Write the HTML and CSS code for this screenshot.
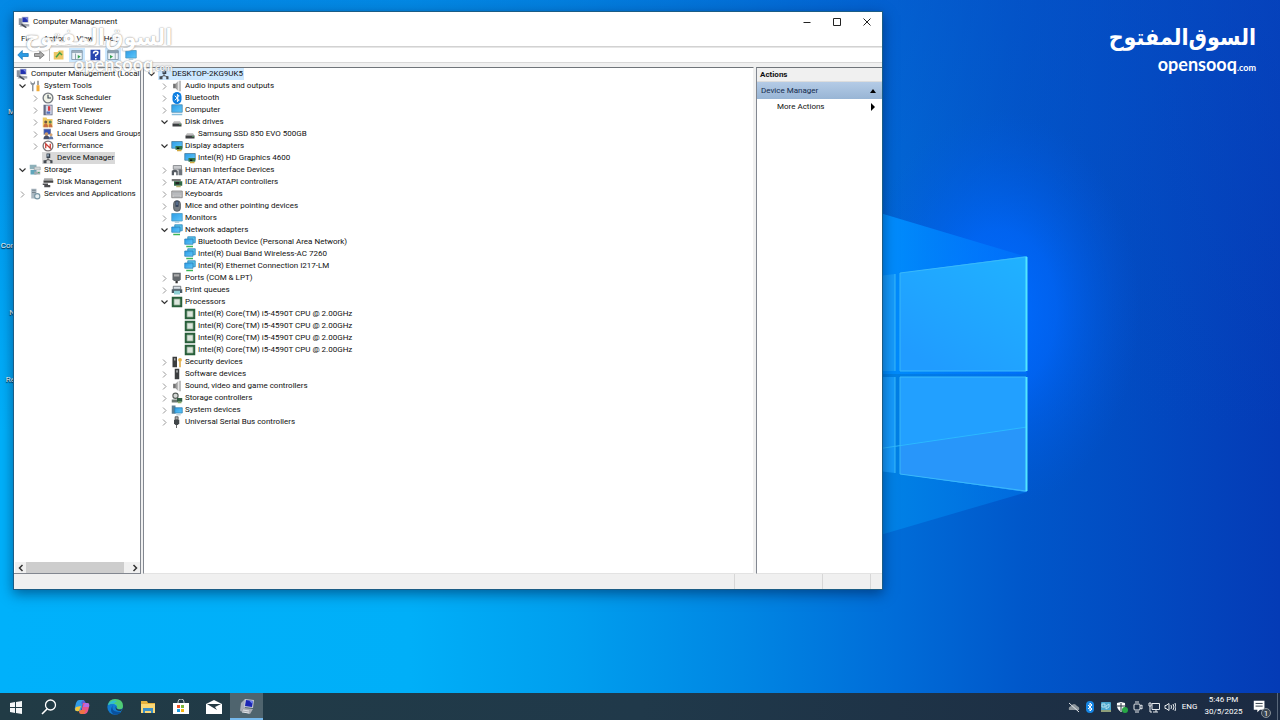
FILE: index.html
```html
<!DOCTYPE html>
<html lang="en">
<head>
<meta charset="utf-8">
<title>Computer Management</title>
<link rel="stylesheet" href="styles.css">
</head>
<body>
<svg class="sprite" aria-hidden="true">
  <defs>
    <linearGradient id="scr" x1="0" y1="0" x2="1" y2="1"><stop offset="0" stop-color="#2a9be6"/><stop offset="1" stop-color="#62c8fa"/></linearGradient>
    <linearGradient id="met" x1="0" y1="0" x2="1" y2="0"><stop offset="0" stop-color="#555"/><stop offset="1" stop-color="#ccc"/></linearGradient>
  </defs>
  <symbol id="open" viewBox="0 0 13 12"><path d="M3.500 4.500l3 3 3-3" fill="none" stroke="#333" stroke-width="1.200"/></symbol>
  <symbol id="closed" viewBox="0 0 13 12"><path d="M5 3.500l3 3-3 3" fill="none" stroke="#999" stroke-width="1"/></symbol>
  <symbol id="mgmt" viewBox="0 0 16 16"><path d="M1 3h5v9H1z" fill="#8c93a0"/><path d="M5 1h9v8H5z" fill="#b8bccb"/><path d="M6 2h7v6H6z" fill="#2433b0"/><path d="M9 2h4v4z" fill="#7786e6"/><path d="M2 14l3-4 10 1v3z" fill="#a4a8b2"/><path d="M5 10l7 5-2 1-6-4z" fill="#454b58"/></symbol>
  <symbol id="mgmtbig" viewBox="0 0 16 16"><path d="M2 5l4-4v9l-5 3z" fill="#aab0bb"/><path d="M6 1l9 1-1 8-9-1z" fill="#c4c8d6"/><path d="M7 2l7 1-1 6-7-1z" fill="#1a25b4"/><path d="M10 2.500l4 .5-.5 3z" fill="#6f82ee"/><path d="M1 13l4-3 9 1-3 5z" fill="#a9adb5"/><path d="M4 12l6 1M3 14l7 1" stroke="#dfe2e6"/></symbol>
  <symbol id="tools" viewBox="0 0 16 16"><path d="M2 1v4l2 2v8h2V7l2-2V1L6 4H4z" fill="#8d949b"/><path d="M11 1h2v6h-2z" fill="#888"/><path d="M10 7h4v8h-4z" fill="#f1aa35"/></symbol>
  <symbol id="clock" viewBox="0 0 16 16"><circle cx="8" cy="8" r="6.500" fill="#f1f3e8" stroke="#777b82" stroke-width="1.800"/><path d="M8 3.500V8h4" fill="none" stroke="#394553" stroke-width="1.500"/></symbol>
  <symbol id="event" viewBox="0 0 16 16"><path d="M2 1h12v14H2z" fill="#626b84"/><path d="M5 2h8v12H5z" fill="#d5d8e8"/><path d="M8 3h3v6H8z" fill="#d43e44"/><path d="M6 10h5v3H6z" fill="#5370bd"/></symbol>
  <symbol id="shared" viewBox="0 0 16 16"><path d="M1 2h5l1 2h7v11H1z" fill="#efcb64"/><circle cx="5" cy="8" r="2" fill="#6b5842"/><circle cx="11" cy="8" r="2" fill="#53855b"/><path d="M2 15q0-5 3-5t3 5zM9 15q0-5 2-5t3 5z" fill="#c86f45"/></symbol>
  <symbol id="users" viewBox="0 0 16 16"><path d="M2 1h10v8H2z" fill="#8993ac"/><path d="M3 2h8v6H3z" fill="#3451b5"/><circle cx="6" cy="8" r="2.500" fill="#c89767"/><path d="M2 15q0-5 4-5t4 5z" fill="#474f68"/><circle cx="12" cy="9" r="2" fill="#d3a476"/><path d="M9 15q0-4 3-4t3 4z" fill="#5c75a5"/></symbol>
  <symbol id="perf" viewBox="0 0 16 16"><circle cx="8" cy="8" r="6.500" fill="#fff" stroke="#7e7779" stroke-width="1.800"/><path d="M5 11V5l6 6V5" fill="none" stroke="#c93c34" stroke-width="1.700"/></symbol>
  <symbol id="device" viewBox="0 0 16 16"><path d="M6 2h5v6H6z" fill="#38424e"/><path d="M7 3h2v3H7z" fill="#a9bed0"/><path d="M8 8v3M4 12l4-2 5 2" fill="none" stroke="#555" stroke-width="1.200"/><path d="M2 11h4v4H2zM11 11h3v4h-3z" fill="#454b52"/></symbol>
  <symbol id="storage" viewBox="0 0 16 16"><path d="M1 1h9v6H1z" fill="#8eb1ba"/><path d="M2 8h8v6H2z" fill="#61a6bc"/><path d="M7 4h8v4H7z" fill="#d4d8d8" stroke="#8b9699" stroke-width=".7"/><path d="M7 10h8v4H7z" fill="#a3aaae"/><path d="M12 11h2v1h-2z" fill="#24a755"/></symbol>
  <symbol id="diskman" viewBox="0 0 16 16"><path d="M3 3h11l1 3H2z" fill="#aaa"/><path d="M2 6h13v3H2z" fill="#444"/><path d="M1 10h7v2H1zM3 12h8v3H3z" fill="#4d4d50"/></symbol>
  <symbol id="services" viewBox="0 0 16 16"><path d="M3 1h7v13H3z" fill="#aab7c0"/><path d="M4 3h5M4 6h5" stroke="#65747e"/><circle cx="11" cy="11" r="3.500" fill="#e8eff2" stroke="#7895a3" stroke-width="1.500"/></symbol>
  <symbol id="speaker" viewBox="0 0 16 16"><path d="M3 5h3l4-4v14l-4-4H3z" fill="url(#met)"/><path d="M11 1h2v14h-2z" fill="#aaa"/></symbol>
  <symbol id="bt" viewBox="0 0 16 16"><rect x="2" y="0" width="12" height="16" rx="6" fill="#0b7de0"/><path d="M5 5l6 5.500-2.500 2.500V3L11 5.500 5 11" fill="none" stroke="#fff" stroke-width="1.300"/></symbol>
  <symbol id="pc" viewBox="0 0 16 16"><path d="M1 1h14v10H1z" fill="url(#scr)" stroke="#4685ac"/><path d="M1 13h14v2H1z" fill="#89bedd"/></symbol>
  <symbol id="disk" viewBox="0 0 16 16"><path d="M4 7h8l2 3H2z" fill="#bbb"/><path d="M2 10h12v4H2z" fill="#3d3f41"/><path d="M11 11h2v1h-2z" fill="#56cf68"/></symbol>
  <symbol id="display" viewBox="0 0 16 16"><path d="M1 2h14v9H1z" fill="url(#scr)" stroke="#46799b"/><path d="M6 8h9v5H6z" fill="#2f7449"/><path d="M8 10h3v2H8z" fill="#111"/><path d="M8 13h6v2H8z" fill="#d5aa3f"/></symbol>
  <symbol id="hid" viewBox="0 0 16 16"><path d="M3 2h11v5H3z" fill="#c7c9cc" stroke="#76797e"/><path d="M1 15V9q4-3 8 0v6H7v-4H4v4z" fill="#545a60"/><path d="M10 7h5v8h-5z" fill="#6e747b"/></symbol>
  <symbol id="ide" viewBox="0 0 16 16"><path d="M1 4h12v3H1z" fill="#777"/><path d="M4 7h11v6H4z" fill="#2f6845"/><path d="M6 8h5v3H6z" fill="#222"/><path d="M7 13h6v2H7z" fill="#b9b36f"/></symbol>
  <symbol id="key" viewBox="0 0 16 16"><path d="M1 4h14v9H1z" fill="#c5c6c7" stroke="#777"/><path d="M2 6h12M2 8h12M4 11h8" stroke="#a6aaad"/></symbol>
  <symbol id="mouse" viewBox="0 0 16 16"><rect x="3.500" y="1" width="9" height="14" rx="4" fill="#777e85" stroke="#44494f"/><path d="M6 1h4v8H6z" fill="#293850"/><path d="M7.500 2h1v5h-1z" fill="#9fc0e8"/></symbol>
  <symbol id="monitor" viewBox="0 0 16 16"><path d="M1 2h14v10H1z" fill="url(#scr)" stroke="#4795bd"/><path d="M5 13h6v1H5z" fill="#6aa6c4"/></symbol>
  <symbol id="net" viewBox="0 0 16 16"><path d="M5 1h10v8H5z" fill="#55bfe9" stroke="#2c83b6"/><path d="M1 4h11v7H1z" fill="url(#scr)" stroke="#297fb5"/><path d="M3 13h9v2H3z" fill="#3cb557"/></symbol>
  <symbol id="port" viewBox="0 0 16 16"><path d="M2 1h11v9l-2 2H4l-2-2z" fill="#62676b"/><path d="M4 3h7v3H4z" fill="#aaa"/><path d="M6 12h3v3H6z" fill="#333"/></symbol>
  <symbol id="printer" viewBox="0 0 16 16"><path d="M3 3h10v4H3z" fill="#d8e0e6" stroke="#545b61"/><path d="M1 7h14v5H1z" fill="#4b5b65"/><path d="M4 9h8v5H4z" fill="#8fd0d5"/></symbol>
  <symbol id="cpu" viewBox="0 0 16 16"><path d="M1 1h14v14H1z" fill="#285f3b"/><path d="M4 4h8v8H4z" fill="#dce6dd" stroke="#85a58c"/></symbol>
  <symbol id="security" viewBox="0 0 16 16"><path d="M2 1h6v14H2z" fill="#3b3d3e"/><path d="M4 3h2v3H4z" fill="#aaa"/><circle cx="12" cy="5" r="2.500" fill="#e5b246"/><path d="M11 7h2v8h-2z" fill="#dea73d"/></symbol>
  <symbol id="software" viewBox="0 0 16 16"><path d="M5 1h6v14H5z" fill="#3c3e40"/><path d="M7 3h2v3H7z" fill="#b5b7b8"/></symbol>
  <symbol id="stctl" viewBox="0 0 16 16"><circle cx="6" cy="5" r="3.500" fill="#d5d8d6" stroke="#59605c" stroke-width="1.500"/><path d="M1 10h8v4H1z" fill="#6b7772"/><path d="M8 8h7v5H8z" fill="#305e42"/><path d="M9 13h5v2H9z" fill="#86aa67"/></symbol>
  <symbol id="system" viewBox="0 0 16 16"><path d="M1 2h5v11H1z" fill="#5d7f93"/><path d="M5 5h10v7H5z" fill="url(#scr)" stroke="#2a7eaf"/><path d="M7 14h6v1H7z" fill="#89a9b8"/></symbol>
  <symbol id="usb" viewBox="0 0 16 16"><path d="M5.500 1h4v4h-4z" fill="#aaa" stroke="#444"/><path d="M4 5h7v5l-2 2H6l-2-2z" fill="#424649"/><path d="M7 12h1v4H7z" fill="#333"/></symbol>
</svg>

<main class="desktop">
  <svg class="wall" viewBox="0 0 1280 720" preserveAspectRatio="none" aria-hidden="true">
    <defs>
      <linearGradient id="base" x1="0" y1="0" x2="1" y2="0"><stop offset="0" stop-color="#00b1fb"/><stop offset=".32" stop-color="#00aff8"/><stop offset=".45" stop-color="#009eee"/><stop offset=".58" stop-color="#0086e3"/><stop offset=".7" stop-color="#006cd8"/><stop offset=".8" stop-color="#0057ca"/><stop offset="1" stop-color="#043bb6"/></linearGradient>
      <linearGradient id="top" x1="0" y1="0" x2="0" y2="1"><stop offset="0" stop-color="#084cc4" stop-opacity=".4"/><stop offset=".6" stop-color="#084cc4" stop-opacity="0"/></linearGradient>
      <radialGradient id="glow"><stop offset="0" stop-color="#006cff"/><stop offset=".4" stop-color="#0068ff" stop-opacity=".7"/><stop offset="1" stop-color="#0058e0" stop-opacity="0"/></radialGradient>
      <linearGradient id="beamA" x1="0" y1="0" x2="1" y2="0"><stop offset="0" stop-color="#0092ff"/><stop offset="1" stop-color="#0078ff" stop-opacity=".5"/></linearGradient>
      <linearGradient id="beamB" x1="0" y1="0" x2="1" y2="0"><stop offset="0" stop-color="#0086e8" stop-opacity=".9"/><stop offset="1" stop-color="#0076e8" stop-opacity=".6"/></linearGradient>
      <linearGradient id="paneA" x1="1" y1="0" x2=".3" y2="1"><stop offset="0" stop-color="#20b2ff"/><stop offset="1" stop-color="#209cff"/></linearGradient>
    </defs>
    <rect width="1280" height="720" fill="url(#base)"/>
    <rect width="1280" height="720" fill="url(#top)"/>
    <ellipse cx="1000" cy="310" rx="140" ry="200" fill="url(#glow)"/>
    <path d="M870 210l157 47v117H870z" fill="url(#beamA)"/>
    <path d="M870 374h157v118l-157 46z" fill="url(#beamB)"/>
    <path d="M870 277l25-3v97h-25zM870 377h25v96l-25-3z" fill="#159bfc"/>
    <path d="M900 273l127-17v115H900z" fill="url(#paneA)"/>
    <path d="M900 377h127v115l-127-18z" fill="#22a0ff"/>
    <path d="M900 445l127-18v65l-127-18z" fill="#2896fa"/>
    <path d="M870 450l157-23" stroke="#2bb9ff"/>
    <path d="M895 274v97M895 377v96M900 371V273l126-16M900 377h126M900 371h126M900 474V377M900 474l126 17" fill="none" stroke="#3ab9fa"/>
    <path d="M1026.500 257v114M1026.500 377v114" stroke="#52e5ff" stroke-width="2"/>
  </svg>

  <div class="shortcuts">
    <span></span><span>M</span><span></span><span>Con</span><span>N</span><span>Re</span>
  </div>

  <section class="window">
    <header class="titlebar">
      <svg class="ico"><use href="#mgmt"/></svg>
      <h1>Computer Management</h1>
      <button aria-label="Minimize"><svg viewBox="0 0 10 10"><path d="M1.500 5.500h7" stroke="#222"/></svg></button>
      <button aria-label="Maximize"><svg viewBox="0 0 10 10"><path d="M1.500 1.500h7v7h-7z" fill="none" stroke="#222"/></svg></button>
      <button aria-label="Close"><svg viewBox="0 0 10 10"><path d="M1.500 1.500l7 7M8.500 1.500l-7 7" stroke="#222"/></svg></button>
    </header>
    <nav class="menubar"><button>File</button><button>Action</button><button>View</button><button>Help</button></nav>
    <div class="toolbar">
      <button aria-label="Back"><svg viewBox="0 0 16 16"><path d="M1 8l6-6v4h8v4H7v4z" fill="#2c9be4" stroke="#1778bb"/></svg></button>
      <button aria-label="Forward"><svg viewBox="0 0 16 16"><path d="M15 8L9 3v3H2v4h7v3z" fill="#aaa" stroke="#666"/></svg></button>
      <i class="rule"></i>
      <button aria-label="Up one level"><svg viewBox="0 0 16 16"><path d="M1 4h5l2-2h6v12H1z" fill="#edc765"/><path d="M4 11l5-6 3 3" fill="none" stroke="#43a04a" stroke-width="2"/></svg></button>
      <button class="on" aria-label="Show console tree"><svg viewBox="0 0 16 16"><path d="M1 2h14v12H1z" fill="#eef4f8" stroke="#71899b"/><path d="M1 3h14v2H1z" fill="#8097a8"/><path d="M6 6v8" stroke="#71899b"/><path d="M9 8l4 2-4 3z" fill="#36a151"/></svg></button>
      <button aria-label="Help"><svg viewBox="0 0 16 16"><path d="M2 1h13v14H2z" fill="#2746b0"/><path d="M6 6q0-3 3-3t3 2q0 2-3 3v2M9 12v2" fill="none" stroke="#fff" stroke-width="2"/></svg></button>
      <button class="on" aria-label="Show action pane"><svg viewBox="0 0 16 16"><path d="M1 2h14v12H1z" fill="#eef4f8" stroke="#71899b"/><path d="M1 3h14v2H1zM11 5v9" fill="#8097a8" stroke="#8097a8"/><path d="M4 8l4 2-4 3z" fill="#36a151"/></svg></button>
      <button aria-label="Scan for hardware changes"><svg viewBox="0 0 16 16"><use href="#monitor"/></svg></button>
    </div>

    <div class="panes">
      <nav class="pane side" aria-label="Console tree">
        <ul class="tree">
          <li><div class="row root"><span class="item"><svg class="ico"><use href="#mgmt"/></svg>Computer Management (Local</span></div>
          <li><div class="row"><button aria-label="Collapse"><svg><use href="#open"/></svg></button><span class="item"><svg class="ico"><use href="#tools"/></svg>System Tools</span></div>
            <ul>
              <li><div class="row"><button aria-label="Expand"><svg><use href="#closed"/></svg></button><span class="item"><svg class="ico"><use href="#clock"/></svg>Task Scheduler</span></div>
              <li><div class="row"><button aria-label="Expand"><svg><use href="#closed"/></svg></button><span class="item"><svg class="ico"><use href="#event"/></svg>Event Viewer</span></div>
              <li><div class="row"><button aria-label="Expand"><svg><use href="#closed"/></svg></button><span class="item"><svg class="ico"><use href="#shared"/></svg>Shared Folders</span></div>
              <li><div class="row"><button aria-label="Expand"><svg><use href="#closed"/></svg></button><span class="item"><svg class="ico"><use href="#users"/></svg>Local Users and Groups</span></div>
              <li><div class="row"><button aria-label="Expand"><svg><use href="#closed"/></svg></button><span class="item"><svg class="ico"><use href="#perf"/></svg>Performance</span></div>
              <li><div class="row leaf"><span class="item current"><svg class="ico"><use href="#device"/></svg>Device Manager</span></div>
            </ul>
          <li><div class="row"><button aria-label="Collapse"><svg><use href="#open"/></svg></button><span class="item"><svg class="ico"><use href="#storage"/></svg>Storage</span></div>
            <ul>
              <li><div class="row leaf"><span class="item"><svg class="ico"><use href="#diskman"/></svg>Disk Management</span></div>
            </ul>
          <li><div class="row"><button aria-label="Expand"><svg><use href="#closed"/></svg></button><span class="item"><svg class="ico"><use href="#services"/></svg>Services and Applications</span></div>
        </ul>
        <div class="scroll">
          <button aria-label="Scroll left"><svg viewBox="0 0 10 10"><path d="M6.500 2L3.500 5l3 3" fill="none" stroke="#333" stroke-width="1.500"/></svg></button>
          <i></i>
          <button aria-label="Scroll right"><svg viewBox="0 0 10 10"><path d="M3.500 2l3 3-3 3" fill="none" stroke="#333" stroke-width="1.500"/></svg></button>
        </div>
      </nav>

      <section class="pane devices" aria-label="Devices">
        <ul class="tree">
          <li><div class="row"><button aria-label="Collapse"><svg><use href="#open"/></svg></button><span class="item selected"><svg class="ico"><use href="#device"/></svg>DESKTOP-2KG9UK5</span></div>
            <ul>
              <li><div class="row"><button aria-label="Expand"><svg><use href="#closed"/></svg></button><span class="item"><svg class="ico"><use href="#speaker"/></svg>Audio inputs and outputs</span></div>
              <li><div class="row"><button aria-label="Expand"><svg><use href="#closed"/></svg></button><span class="item"><svg class="ico"><use href="#bt"/></svg>Bluetooth</span></div>
              <li><div class="row"><button aria-label="Expand"><svg><use href="#closed"/></svg></button><span class="item"><svg class="ico"><use href="#pc"/></svg>Computer</span></div>
              <li><div class="row"><button aria-label="Collapse"><svg><use href="#open"/></svg></button><span class="item"><svg class="ico"><use href="#disk"/></svg>Disk drives</span></div>
                <ul>
                  <li><div class="row"><span class="item"><svg class="ico"><use href="#disk"/></svg>Samsung SSD 850 EVO 500GB</span></div>
                </ul>
              <li><div class="row"><button aria-label="Collapse"><svg><use href="#open"/></svg></button><span class="item"><svg class="ico"><use href="#display"/></svg>Display adapters</span></div>
                <ul>
                  <li><div class="row"><span class="item"><svg class="ico"><use href="#display"/></svg>Intel(R) HD Graphics 4600</span></div>
                </ul>
              <li><div class="row"><button aria-label="Expand"><svg><use href="#closed"/></svg></button><span class="item"><svg class="ico"><use href="#hid"/></svg>Human Interface Devices</span></div>
              <li><div class="row"><button aria-label="Expand"><svg><use href="#closed"/></svg></button><span class="item"><svg class="ico"><use href="#ide"/></svg>IDE ATA/ATAPI controllers</span></div>
              <li><div class="row"><button aria-label="Expand"><svg><use href="#closed"/></svg></button><span class="item"><svg class="ico"><use href="#key"/></svg>Keyboards</span></div>
              <li><div class="row"><button aria-label="Expand"><svg><use href="#closed"/></svg></button><span class="item"><svg class="ico"><use href="#mouse"/></svg>Mice and other pointing devices</span></div>
              <li><div class="row"><button aria-label="Expand"><svg><use href="#closed"/></svg></button><span class="item"><svg class="ico"><use href="#monitor"/></svg>Monitors</span></div>
              <li><div class="row"><button aria-label="Collapse"><svg><use href="#open"/></svg></button><span class="item"><svg class="ico"><use href="#net"/></svg>Network adapters</span></div>
                <ul>
                  <li><div class="row"><span class="item"><svg class="ico"><use href="#net"/></svg>Bluetooth Device (Personal Area Network)</span></div>
                  <li><div class="row"><span class="item"><svg class="ico"><use href="#net"/></svg>Intel(R) Dual Band Wireless-AC 7260</span></div>
                  <li><div class="row"><span class="item"><svg class="ico"><use href="#net"/></svg>Intel(R) Ethernet Connection I217-LM</span></div>
                </ul>
              <li><div class="row"><button aria-label="Expand"><svg><use href="#closed"/></svg></button><span class="item"><svg class="ico"><use href="#port"/></svg>Ports (COM &amp; LPT)</span></div>
              <li><div class="row"><button aria-label="Expand"><svg><use href="#closed"/></svg></button><span class="item"><svg class="ico"><use href="#printer"/></svg>Print queues</span></div>
              <li><div class="row"><button aria-label="Collapse"><svg><use href="#open"/></svg></button><span class="item"><svg class="ico"><use href="#cpu"/></svg>Processors</span></div>
                <ul>
                  <li><div class="row"><span class="item"><svg class="ico"><use href="#cpu"/></svg>Intel(R) Core(TM) i5-4590T CPU @ 2.00GHz</span></div>
                  <li><div class="row"><span class="item"><svg class="ico"><use href="#cpu"/></svg>Intel(R) Core(TM) i5-4590T CPU @ 2.00GHz</span></div>
                  <li><div class="row"><span class="item"><svg class="ico"><use href="#cpu"/></svg>Intel(R) Core(TM) i5-4590T CPU @ 2.00GHz</span></div>
                  <li><div class="row"><span class="item"><svg class="ico"><use href="#cpu"/></svg>Intel(R) Core(TM) i5-4590T CPU @ 2.00GHz</span></div>
                </ul>
              <li><div class="row"><button aria-label="Expand"><svg><use href="#closed"/></svg></button><span class="item"><svg class="ico"><use href="#security"/></svg>Security devices</span></div>
              <li><div class="row"><button aria-label="Expand"><svg><use href="#closed"/></svg></button><span class="item"><svg class="ico"><use href="#software"/></svg>Software devices</span></div>
              <li><div class="row"><button aria-label="Expand"><svg><use href="#closed"/></svg></button><span class="item"><svg class="ico"><use href="#speaker"/></svg>Sound, video and game controllers</span></div>
              <li><div class="row"><button aria-label="Expand"><svg><use href="#closed"/></svg></button><span class="item"><svg class="ico"><use href="#stctl"/></svg>Storage controllers</span></div>
              <li><div class="row"><button aria-label="Expand"><svg><use href="#closed"/></svg></button><span class="item"><svg class="ico"><use href="#system"/></svg>System devices</span></div>
              <li><div class="row"><button aria-label="Expand"><svg><use href="#closed"/></svg></button><span class="item"><svg class="ico"><use href="#usb"/></svg>Universal Serial Bus controllers</span></div>
            </ul>
        </ul>
      </section>

      <aside class="pane actions">
        <h2>Actions</h2>
        <button class="group">Device Manager<svg viewBox="0 0 8 8"><path d="M1 6l3-4 3 4z"/></svg></button>
        <button class="more">More Actions<svg viewBox="0 0 8 8"><path d="M2 0l4 4-4 4z"/></svg></button>
      </aside>
    </div>
    <footer class="status"><i></i><i></i><i></i></footer>
  </section>

  <div class="brand outline"><b lang="ar" dir="rtl">السوق‌المفتوح</b><span>opensooq<small>.com</small></span></div>
  <div class="brand solid"><b lang="ar" dir="rtl">السوق‌المفتوح</b><span>opensooq<small>.com</small></span></div>
</main>

<footer class="taskbar">
  <div class="apps">
    <button aria-label="Start"><svg viewBox="0 0 16 16"><path d="M2 4l5-1v5H2zM8 3l6-1v6H8zM2 9h5v5l-5-1zM8 9h6v6l-6-1z" fill="#f4f6f7"/></svg></button>
    <button aria-label="Search"><svg viewBox="0 0 16 16"><circle cx="9.500" cy="6" r="5" fill="none" stroke="#fff" stroke-width="1.300"/><path d="M6 10l-5 5" stroke="#fff" stroke-width="1.600"/></svg></button>
    <button aria-label="Copilot"><svg viewBox="0 0 16 16"><path d="M5 1h5L7 12H3q-3 0-2-4l1-4q1-3 3-3z" fill="#2f9be8"/><path d="M2 8l-1 2q0 3 4 2l2-5z" fill="#f0c63c"/><path d="M9 1q2 0 3 4l-3 1-2-2z" fill="#5762d8"/><path d="M9 4h4q3 0 2 4l-1 4q-1 3-3 3H7z" fill="#e8558c"/><path d="M11 4h2q3 0 2 4H9z" fill="#b46be3"/><path d="M7 11h5l-2 4H7q-2 0-2-3z" fill="#ef7445"/></svg></button>
    <button aria-label="Edge"><svg viewBox="0 0 16 16"><circle cx="8" cy="8" r="7.700" fill="#127bd1"/><path d="M1 6Q2 0 8 0q8 0 8 7 0 4-5 3-2-1-1-3Q8 3 1 6z" fill="#4fcb75"/><path d="M1 6Q4 0 10 2L6 5q4-1 4 2Q6 3 1 6z" fill="#2fbed2"/><path d="M6 6q-3 7 8 7-3 4-8 2-4-3 0-9z" fill="#0a519e"/><path d="M9 7q0 5 6 3l-1 2q-7 0-5-5z" fill="#233a42"/></svg></button>
    <button aria-label="File Explorer"><svg viewBox="0 0 16 16"><path d="M1 2h6l1 2h7v10H1z" fill="#e6b23f"/><path d="M1 5h14v9H1z" fill="#fbd876"/><path d="M3 9h10v5h-2v-2H5v2H3z" fill="#3b8fc7"/></svg></button>
    <button aria-label="Microsoft Store"><svg viewBox="0 0 16 16"><path d="M5 5V3q0-3 3-3t3 3v2" fill="none" stroke="#b9c5cb"/><path d="M0 4h16v11H0z" fill="#fff"/><path d="M4 6h3v3H4z" fill="#f05123"/><path d="M8 6h3v3H8z" fill="#7bb83c"/><path d="M4 10h3v3H4z" fill="#1a9ee4"/><path d="M8 10h3v3H8z" fill="#f9b80e"/></svg></button>
    <button aria-label="Mail"><svg viewBox="0 0 16 16"><path d="M0 5l8-4 8 4v10H0z" fill="#fff"/><path d="M1 5h14l-6 3 2 3z" fill="#243a43"/></svg></button>
    <button class="active" aria-label="Computer Management"><svg viewBox="0 0 16 16"><use href="#mgmtbig"/></svg></button>
  </div>
  <div class="tray">
    <button aria-label="OneDrive"><svg viewBox="0 0 12 12"><path d="M1 9q-1-3 2-4 3-4 6 0 3 1 2 4z" fill="#8e979e"/><path d="M1 2l10 9" stroke="#e6eaed"/></svg></button>
    <button aria-label="Bluetooth"><svg viewBox="0 0 12 12"><rect x="2" y="0" width="8" height="12" rx="4" fill="#1686e5"/><path d="M4 4l4 4-2 2V2l2 2-4 4" fill="none" stroke="#fff"/></svg></button>
    <button aria-label="Graphics"><svg viewBox="0 0 12 12"><rect x="1" y="1" width="10" height="10" rx="1" fill="#4ba6cc"/><path d="M2 3h3v3H2zM6 5l3-2v3L6 8z" fill="none" stroke="#b5e0ee"/><path d="M1 9h10v2H1z" fill="#8e9f7a"/></svg></button>
    <button aria-label="Security"><svg viewBox="0 0 12 12"><path d="M1 2l4-1 4 1q1 6-4 9Q0 8 1 2z" fill="#fff"/><path d="M5 2v8M1 5h8" stroke="#243441"/><circle cx="9" cy="9" r="3" fill="#27a745"/></svg></button>
    <button aria-label="Camera"><svg viewBox="0 0 12 12"><rect x="2" y="3" width="6" height="6" rx="1" fill="none" stroke="#e6eaed"/><path d="M8 5l2-1v4L8 7M3 1h4M3 11h4" fill="none" stroke="#e6eaed"/></svg></button>
    <button aria-label="Network"><svg viewBox="0 0 12 12"><path d="M4 2.500h7.500v6H4zM5 11h5M8 9v2M1 2h2v3H1zM2 5v6h2" fill="none" stroke="#e6eaed"/></svg></button>
    <button aria-label="Volume"><svg viewBox="0 0 12 12"><path d="M1 4.500h1l3-2v7l-3-2H1z" fill="none" stroke="#e6eaed"/><path d="M7 4q1 2 0 4M9 3q2 3 0 6M11 2q2 4 0 8" fill="none" stroke="#e6eaed"/></svg></button>
    <button class="lang">ENG</button>
    <time><span>5:46 PM</span><span>30/5/2025</span></time>
    <button class="note" aria-label="Notifications"><svg viewBox="0 0 18 18"><path d="M2 2h12v10H9l-3 3v-3H2z" fill="#fff"/><path d="M4 5h8M4 8h8" stroke="#222f3c"/></svg><span class="count">1</span></button>
    <i class="peek"></i>
  </div>
</footer>
</body>
</html>
```

FILE: styles.css
```css
* { box-sizing: border-box; }
body {
  margin: 0; height: 100vh; display: grid; grid-template-rows: 1fr 27px; overflow: hidden;
  font: 8px/12px Roboto, "Open Sans", sans-serif; color: #111;
}
button { font: inherit; color: inherit; background: none; border: 0; padding: 0; margin: 0; display: flex; align-items: center; justify-content: center; }
h1, h2, ul { margin: 0; padding: 0; font-size: 8px; font-weight: 400; }
ul { list-style: none; }
svg { display: block; }
.sprite { position: absolute; width: 0; height: 0; }

.desktop { position: relative; min-height: 0; }
.wall { position: absolute; top: 0; left: 0; width: 100%; height: 100vh; }
.shortcuts { position: absolute; left: 0; top: 51px; width: 15px; display: grid; grid-template-rows: 0 repeat(5, 67px); overflow: hidden; color: #fff; text-shadow: 0 1px 1px #000; text-align: right; }
.shortcuts span { display: flex; justify-content: flex-end; align-items: flex-end; }

.window {
  position: absolute; left: 14px; top: 12px; right: 398px; bottom: 104px;
  display: flex; flex-direction: column; background: #f0f0f0;
  box-shadow: 0 0 0 1px #1b5d86, 0 4px 12px 1px rgba(0, 20, 60, .5);
}
.titlebar { display: flex; height: 19px; background: #fff; align-items: center; padding-left: 4px; }
.titlebar h1 { flex: 1; padding-left: 2px; }
.titlebar button { width: 30px; height: 19px; }
.titlebar button svg { width: 10px; height: 10px; }
.ico { width: 12px; height: 12px; margin-right: 1px; flex: none; }
.menubar { display: flex; height: 16px; background: #fff; border-bottom: 1px solid #d2d2d2; padding-left: 2px; }
.menubar button { padding: 0 5px; }
.toolbar { display: flex; align-items: center; height: 16px; background: #fff; border-top: 1px solid #e6e6e6; border-bottom: 1px solid #d8d8d8; padding-left: 1px; }
.toolbar button { width: 16px; height: 14px; margin-right: 2px; }
.toolbar button:first-child { margin-right: 0; }
.toolbar svg { width: 12px; height: 12px; }
.toolbar .on { background: #cce8ff; }
.rule { width: 1px; height: 12px; background: #bbb; margin-right: 1px; }

.panes { flex: 1; min-height: 0; display: grid; grid-template-columns: 127px 1fr 126px; column-gap: 2px; padding-top: 4px; }
.pane { background: #fff; border: 1px solid #828790; border-top-color: #6f7479; min-width: 0; overflow: hidden; }
.side { display: flex; flex-direction: column; border-left: 0; padding-left: 2px; }
.side .tree { flex: 1; }
.side .item { gap: 2px; }
.devices { border-right-color: #f0f0f0; border-bottom-color: #e3e3e3; padding-left: 1px; }
.actions { border-right: 0; border-bottom-color: #e3e3e3; }
.row { display: flex; height: 12px; white-space: nowrap; }
.row button { width: 13px; height: 12px; flex: none; }
.row button svg { width: 13px; height: 12px; }
.item { display: flex; align-items: center; gap: 1px; padding-right: 1px; }
.tree ul { padding-left: 13px; }
.devices .tree ul ul { padding-left: 26px; }
.leaf { padding-left: 13px; }
.current { background: #d9d9d9; }
.selected { background: #cce8ff; }
.scroll { display: flex; height: 11px; background: #f0f0f0; margin-left: -1px; }
.scroll button { width: 11px; }
.scroll button svg { width: 10px; height: 10px; }
.scroll i { flex: 1; background: #cdcdcd; margin-right: 5px; }

.actions h2 { font-weight: 700; height: 14px; line-height: 14px; padding-left: 3px; background: #f0f0f0; border-bottom: 1px solid #ddd; }
.actions button { width: 100%; justify-content: space-between; padding: 0 5px 0 4px; }
.actions svg { width: 8px; height: 8px; }
.group { height: 17px; background: linear-gradient(#b4cbe6, #98b5d5); color: #142a4d; }
.actions .more { height: 16px; padding-left: 20px; }
.status { height: 15px; display: grid; grid-template-columns: 1fr 88px 48px 11px; }
.status i { border-right: 1px solid #d7d7d7; }

.brand { position: absolute; top: 21px; display: flex; flex-direction: column; align-items: flex-end; color: #fff; font-weight: 700; pointer-events: none; }
.brand b { font: 700 23px/33px "DejaVu Sans Condensed", "DejaVu Sans", sans-serif; white-space: nowrap; }
.brand span { font: 700 18px/20px Lato, sans-serif; }
.brand small { font-size: 9px; }
.solid { right: 24px; }
.outline { left: 25px; text-shadow: 0 0 1px #888, 0 0 2px #aaa; opacity: .9; }

.taskbar { position: relative; display: flex; justify-content: space-between; background: linear-gradient(90deg, #213b45, #20394a 50%, #1b2a42); color: #fff; }
.apps, .tray { display: flex; }
.apps { margin-left: -1px; }
.apps button { width: 33px; }
.apps svg { width: 16px; height: 16px; }
.apps .active { background: #4f646e; border-bottom: 2px solid #76b9ed; }
.tray button { width: 16px; }
.tray svg { width: 12px; height: 12px; }
.tray .lang { width: 23px; }
.tray time { width: 45px; display: flex; flex-direction: column; align-items: center; padding-top: 1px; }
.tray .note { position: relative; width: 28px; }
.note svg { width: 16px; height: 16px; }
.count { position: absolute; right: 3px; bottom: 2px; width: 10px; height: 10px; line-height: 9px; border-radius: 50%; background: #39444f; border: 1px solid #89929a; }
.peek { width: 3px; border-left: 1px solid #58677a; margin-left: 3px; }
```
